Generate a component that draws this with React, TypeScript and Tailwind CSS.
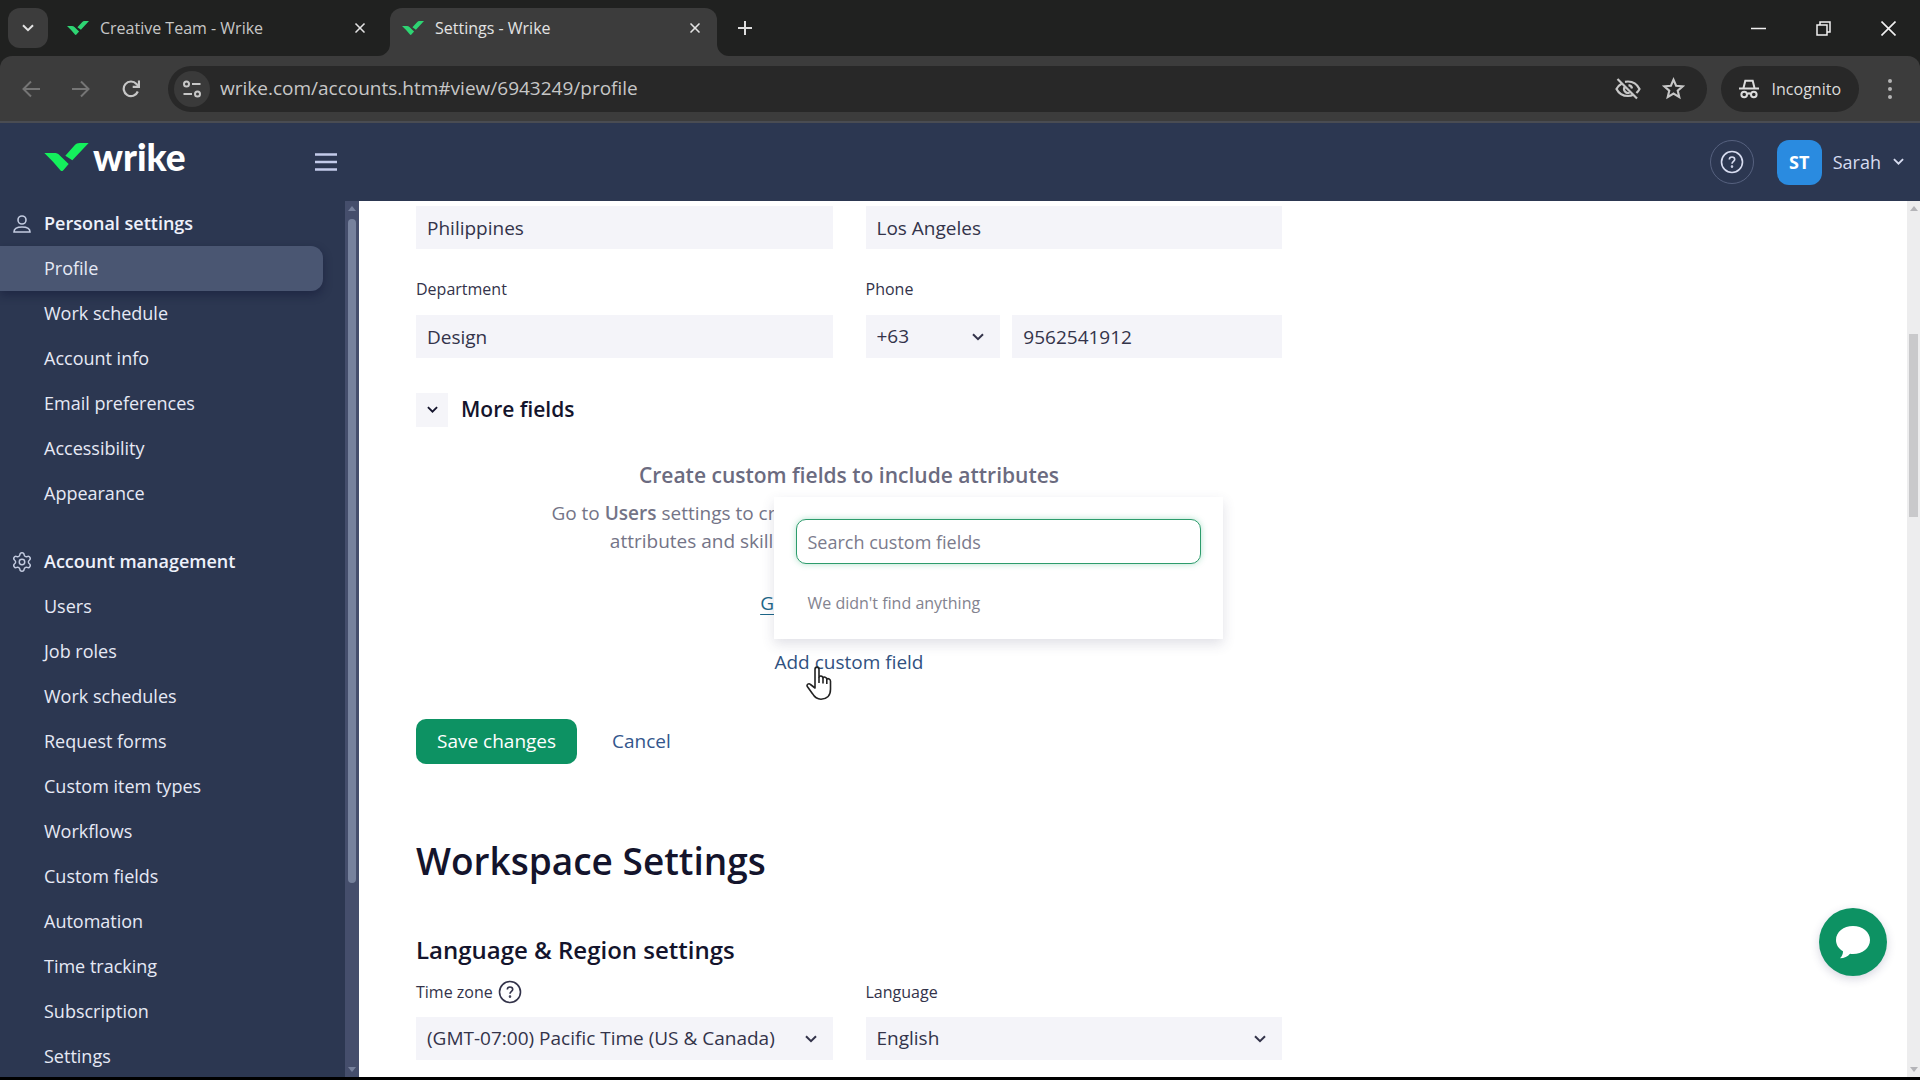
import React from "react";
import { Settings, X } from "lucide-react";

const personal = ["Profile", "Work schedule", "Account info", "Email preferences", "Accessibility", "Appearance"];
const account = [
  "Users", "Job roles", "Work schedules", "Request forms", "Custom item types", "Workflows",
  "Custom fields", "Automation", "Time tracking", "Subscription", "Settings",
];

function WrikeMark({ className }: { className: string }) {
  return (
    <svg viewBox="0 0 133 84" className={className} fill="currentColor" aria-hidden="true">
      <path d="M0 30h30c6 0 11 2 15 6l28 27-16 19c-3 3-6 3-9 0L26 56 0 30Z" />
      <path d="M63 38 91 7c4-5 9-7 15-7h27L84 52Z" />
    </svg>
  );
}

function Chevron({ className }: { className: string }) {
  return (
    <svg viewBox="0 0 12 8" className={className} fill="none" stroke="currentColor" strokeWidth="2" aria-hidden="true">
      <path d="M1 1.2 6 6.2l5-5" />
    </svg>
  );
}

function Tab({ title, active }: { title: string; active?: boolean }) {
  return (
    <div
      className={
        active
          ? "relative flex h-12 w-[327px] items-center rounded-t-xl bg-[#3c3c3c] pr-[14px] pb-2 pl-3 text-[#e3e3e3]"
          : "flex h-12 w-[342px] items-center pr-[22px] pb-2 pl-[19px] text-[#c7c7c7]"
      }
    >
      {active && (
        <>
          <svg viewBox="0 0 12 12" className="absolute bottom-0 -left-3 size-3 text-[#3c3c3c]" aria-hidden="true">
            <path d="M12 0v12H0A12 12 0 0 0 12 0Z" fill="currentColor" />
          </svg>
          <svg viewBox="0 0 12 12" className="absolute -right-3 bottom-0 size-3 text-[#3c3c3c]" aria-hidden="true">
            <path d="M0 0v12h12A12 12 0 0 1 0 0Z" fill="currentColor" />
          </svg>
        </>
      )}
      <WrikeMark className="h-[14px] w-[22px] text-[#2ed573]" />
      <span className="ml-[11px] flex-1 text-[16px]">{title}</span>
      <button aria-label={"Close " + title}>
        <X className="size-4 text-[#e3e3e3]" strokeWidth={2.5} />
      </button>
    </div>
  );
}

function BrowserChrome() {
  return (
    <div className="shrink-0 bg-[#202120]">
      <div className="flex h-14 items-end">
        <div className="flex h-12 items-start pl-2">
          <button aria-label="Search tabs" className="flex size-10 items-center justify-center rounded-xl bg-[#3c3c3c] text-[#e3e3e3]">
            <Chevron className="w-3" />
          </button>
        </div>
        <div className="flex">
          <Tab title="Creative Team - Wrike" />
          <Tab title="Settings - Wrike" active />
        </div>
        <button aria-label="New tab" className="mb-5 ml-5 text-[#dedede]">
          <svg viewBox="0 0 16 16" className="size-4" stroke="currentColor" strokeWidth="2" aria-hidden="true">
            <path d="M8 1v14M1 8h14" />
          </svg>
        </button>
        <div className="mb-5 ml-auto flex items-center gap-[50px] pr-6 text-[#f0f0f0]">
          <button aria-label="Minimize">
            <svg viewBox="0 0 15 15" className="size-[15px]" stroke="currentColor" strokeWidth="1.5" aria-hidden="true">
              <path d="M0 7.5h15" />
            </svg>
          </button>
          <button aria-label="Restore">
            <svg viewBox="0 0 15 15" className="size-[15px]" fill="none" stroke="currentColor" strokeWidth="1.5" aria-hidden="true">
              <path d="M1 4h10v10H1zM4 4V1h10v10h-3" />
            </svg>
          </button>
          <button aria-label="Close window">
            <svg viewBox="0 0 15 15" className="size-[15px]" stroke="currentColor" strokeWidth="1.6" aria-hidden="true">
              <path d="m.5.5 14 14M14.5.5l-14 14" />
            </svg>
          </button>
        </div>
      </div>
      <div className="flex h-[67px] items-center rounded-t-xl border-b-2 border-[#4a4c52] bg-[#3c3c3c]">
        <div className="flex items-center gap-8 pl-[22px]">
          <button aria-label="Back" className="text-[#757575]">
            <svg viewBox="0 0 18 18" className="size-[18px]" fill="none" stroke="currentColor" strokeWidth="2" aria-hidden="true">
              <path d="M18 9H1.500M9 1.500 1.500 9 9 16.500" />
            </svg>
          </button>
          <button aria-label="Forward" className="text-[#757575]">
            <svg viewBox="0 0 18 18" className="size-[18px]" fill="none" stroke="currentColor" strokeWidth="2" aria-hidden="true">
              <path d="M0 9h16.500M9 1.500 16.500 9 9 16.500" />
            </svg>
          </button>
          <button aria-label="Reload" className="text-[#c7c7c7]">
            <svg viewBox="0 0 18 18" className="size-[18px]" fill="none" stroke="currentColor" strokeWidth="2.200" aria-hidden="true">
              <path d="M15.800 11.500A7.300 7.300 0 1 1 14.500 4l2.300 2.300" />
              <path d="M17 .5v6.300h-6.300" />
            </svg>
          </button>
        </div>
        <div className="ml-7 flex h-[46px] min-w-0 flex-1 items-center rounded-full bg-[#282828] pr-[22px] pl-[6px] text-[#c7c7c7]">
          <button aria-label="View site information" className="flex size-9 shrink-0 items-center justify-center rounded-full bg-[#3a3a3a]">
            <svg viewBox="0 0 18 18" className="size-[18px]" fill="none" stroke="currentColor" strokeWidth="2" aria-hidden="true">
              <circle cx="3.500" cy="4" r="2.500" />
              <path d="M9 4h8.500M.5 14H9" />
              <circle cx="14.500" cy="14" r="2.500" />
            </svg>
          </button>
          <input
            aria-label="Address"
            defaultValue="wrike.com/accounts.htm#view/6943249/profile"
            className="ml-[10px] min-w-0 flex-1 bg-transparent text-[19px] outline-none"
          />
          <button aria-label="Third-party cookies blocked">
            <svg viewBox="0 0 26 22" className="h-[22px] w-[26px]" fill="none" stroke="currentColor" strokeWidth="2.200" aria-hidden="true">
              <path d="M7 5.500C4.500 6.800 2.700 8.700 1.500 11c2 4 6.200 7 11.500 7 2 0 3.800-.4 5.400-1.200M10 3.800c1-.2 2-.3 3-.3 5.300 0 9.500 3.500 11.500 7.500-.7 1.400-1.800 2.800-3.100 4" />
              <path d="M9.700 8.800A4 4 0 0 0 14.500 14.700M13.500 7.100A4 4 0 0 1 17 10.500M2.500 1 22 20.500" />
            </svg>
          </button>
          <button aria-label="Bookmark this tab" className="ml-[21px]">
            <svg viewBox="0 0 24 24" className="size-[23px]" fill="none" stroke="currentColor" strokeWidth="2.200" aria-hidden="true">
              <path d="m12 2.800 2.700 6.300 6.900.6-5.200 4.500 1.600 6.700-6-3.600-6 3.600 1.600-6.700-5.200-4.500 6.900-.6Z" />
            </svg>
          </button>
        </div>
        <button className="ml-[14px] flex h-[46px] items-center rounded-full bg-[#282828] px-[18px] text-[16px] text-[#dcdcdc]">
          <svg viewBox="0 0 20 20" className="mr-[13px] size-5" fill="none" stroke="currentColor" strokeWidth="2" aria-hidden="true">
            <path d="M0 9.500h20M4.500 9 6.300 1.800h7.400L15.500 9" />
            <circle cx="5.200" cy="15.500" r="2.800" />
            <circle cx="14.800" cy="15.500" r="2.800" />
            <path d="M8 15c1.300-.8 2.700-.8 4 0" />
          </svg>
          Incognito
        </button>
        <button aria-label="Browser menu" className="mr-7 ml-[29px]">
          <svg viewBox="0 0 4 20" className="h-5 w-1 text-[#b5b5b5]" fill="currentColor" aria-hidden="true">
            <circle cx="2" cy="2" r="2" />
            <circle cx="2" cy="10" r="2" />
            <circle cx="2" cy="18" r="2" />
          </svg>
        </button>
      </div>
    </div>
  );
}

function HelpIcon({ className }: { className: string }) {
  return (
    <svg viewBox="0 0 24 24" className={className} fill="none" stroke="currentColor" strokeWidth="1.600" aria-hidden="true">
      <circle cx="12" cy="12" r="10.500" />
      <path d="M9.300 9.600C9.300 8 10.400 7 12 7s2.700 1 2.700 2.400c0 1.900-2.700 2-2.700 4.300" />
      <circle cx="12" cy="16.600" r=".5" fill="currentColor" />
    </svg>
  );
}

function AppHeader() {
  return (
    <header className="flex h-[78px] shrink-0 items-center bg-[#2c3751] text-[#d7dcf0]">
      <div className="flex w-[337px] items-center justify-between pl-11">
        <a href="#home" className="flex items-center pb-[10px]">
          <WrikeMark className="h-7 w-[45px] text-[#14f05c]" />
          <span className="ml-1 font-['Lato'] text-[37px] leading-7 font-black text-white">wrike</span>
        </a>
        <button aria-label="Toggle menu">
          <svg viewBox="0 0 22 18" className="h-[18px] w-[22px] text-[#c3cbea]" stroke="currentColor" strokeWidth="2.500" aria-hidden="true">
            <path d="M0 1.500h22M0 9h22M0 16.500h22" />
          </svg>
        </button>
      </div>
      <button aria-label="Help" className="ml-auto flex size-11 items-center justify-center rounded-full border border-[#56617f]">
        <HelpIcon className="size-6" />
      </button>
      <button className="ml-[23px] flex items-center pr-4 text-[18px]">
        <span className="flex size-[45px] items-center justify-center rounded-xl bg-[#2a8be0] font-bold text-white">ST</span>
        <span className="ml-[11px]">Sarah</span>
        <Chevron className="ml-3 w-[11px]" />
      </button>
    </header>
  );
}

function NavGroup({ title, icon, items }: { title: string; icon: React.ReactNode; items: string[] }) {
  return (
    <section>
      <h2 className="flex h-[45px] items-center pl-3 text-[18px] font-semibold text-[#eef1fb]">
        <span className="mr-3 flex w-5 justify-center text-[#c3cbe0]">{icon}</span>
        {title}
      </h2>
      <ul>
        {items.map((item) => (
          <li key={item}>
            <a
              href={"#" + item}
              className={
                item === "Profile"
                  ? "mr-[22px] flex h-[45px] items-center rounded-r-xl bg-[#4a5672] pl-11 shadow-[0_4px_10px_rgba(15,20,50,0.45)]"
                  : "mr-[22px] flex h-[45px] items-center pl-11"
              }
            >
              {item}
            </a>
          </li>
        ))}
      </ul>
    </section>
  );
}

function Sidebar() {
  return (
    <aside className="flex w-[359px] shrink-0 bg-[#2c3751] text-[18px] text-[#e6e9f5]">
      <nav className="min-w-0 flex-1 space-y-[23px] overflow-hidden">
        <NavGroup
          title="Personal settings"
          items={personal}
          icon={
            <svg viewBox="0 0 18 18" className="size-[18px]" fill="none" stroke="currentColor" strokeWidth="1.600" aria-hidden="true">
              <circle cx="9" cy="5" r="4" />
              <path d="M1 17c0-3 3-5 8-5s8 2 8 5Z" />
            </svg>
          }
        />
        <NavGroup title="Account management" items={account} icon={<Settings className="size-[22px] shrink-0" strokeWidth={1.6} />} />
      </nav>
      <div className="flex w-[14px] flex-col items-center justify-between bg-[#454e6c] py-[5px]">
        <svg viewBox="0 0 8 5" className="w-2 shrink-0 text-[#77819d]" fill="currentColor" aria-hidden="true"><path d="M0 5 4 0l4 5Z" /></svg>
        <div className="my-2 flex-1">
          <div className="h-[79%] w-2 rounded-full bg-[#77829d]" />
        </div>
        <svg viewBox="0 0 8 5" className="w-2 shrink-0 text-[#77819d]" fill="currentColor" aria-hidden="true"><path d="m0 0 4 5 4-5Z" /></svg>
      </div>
    </aside>
  );
}

const field = "h-[43px] w-full bg-[#f4f4f9] px-[11px] text-[19px] text-[#33334a] outline-none";

function SelectBox({ id, value, label }: { id: string; value: string; label?: string }) {
  return (
    <div className="relative">
      <select id={id} aria-label={label} defaultValue={value} className={field + " appearance-none"}>
        <option>{value}</option>
      </select>
      <Chevron className="pointer-events-none absolute top-[18px] right-4 w-3 text-[#33334a]" />
    </div>
  );
}

function CustomFieldPopup() {
  return (
    <div className="absolute bottom-full left-0 z-10 mb-[9px] w-[449px] bg-white px-[22px] pt-[22px] pb-6 text-left shadow-[0_5px_12px_rgba(60,60,100,0.16)]">
      <input
        aria-label="Search custom fields"
        placeholder="Search custom fields"
        className="h-[45px] w-full rounded-[10px] border border-[#2d9c6c] bg-white px-[10px] text-[18px] outline-none placeholder:text-[#7b7b8c] shadow-[0_0_6px_rgba(30,170,110,0.35)]"
      />
      <p className="mt-[27px] ml-[11px] text-[16px] leading-6 text-[#83838f]">We didn't find anything</p>
    </div>
  );
}

function PointerCursor() {
  return (
    <svg viewBox="0 0 26 35" className="pointer-events-none absolute top-[18px] left-8 z-20 h-[35px] w-[26px]" fill="white" stroke="#222" strokeWidth="1.600" strokeLinejoin="round" aria-hidden="true">
      <path d="M9 21V3.500C9 .3 13 .3 13 3.500V11c.5-1.500 3.800-1.200 4 .8.800-1.300 3.700-.8 3.800 1.200 1.200-.8 3.700-.2 3.700 2.200v8c0 6.500-4 10-9.500 10-4 0-6.500-2-8.500-5.500L1.300 20.500c-1-2 1.500-3.700 3.200-2L9 22Z" />
      <path d="M13 11v6M17 12v5.500M20.800 13v5" fill="none" />
    </svg>
  );
}

function Content() {
  return (
    <main className="min-w-0 flex-1 overflow-hidden pt-[5px] pl-[57px] text-[#14142c]">
      <form className="max-w-[866px]">
        <div className="grid grid-cols-2 gap-x-[33px]">
          <input aria-label="Country" defaultValue="Philippines" className={field} />
          <input aria-label="City" defaultValue="Los Angeles" className={field} />
          <div className="mt-7">
            <label htmlFor="department" className="block text-[16px] leading-6 text-[#33334a]">Department</label>
            <input id="department" defaultValue="Design" className={field + " mt-[14px]"} />
          </div>
          <div className="mt-7">
            <label htmlFor="phone" className="block text-[16px] leading-6 text-[#33334a]">Phone</label>
            <div className="mt-[14px] grid grid-cols-[1fr_2fr] gap-3">
              <SelectBox id="code" label="Country code" value="+63" />
              <input id="phone" defaultValue="9562541912" className={field} />
            </div>
          </div>
        </div>

        <div className="mt-[35px] flex h-[34px] items-center">
          <button type="button" aria-label="Toggle more fields" className="flex h-[34px] w-8 items-center justify-center bg-[#f5f5f9]">
            <Chevron className="w-[11px]" />
          </button>
          <h3 className="ml-[13px] text-[21px] font-semibold">More fields</h3>
        </div>

        <div className="mt-[34px] text-center text-[19px] leading-7 text-[#747487]">
          <h4 className="text-[21px] leading-7 font-semibold text-[#6b6b80]">Create custom fields to include attributes</h4>
          <p className="mt-[10px]">
            Go to <b className="font-semibold">Users</b> settings to create custom fields with information about
            <br />
            attributes and skills of users. They will all appear here.
          </p>
          <a href="#users" className="mt-[34px] inline-block align-top text-[#1c6688] underline underline-offset-4">Go to Users settings</a>
          <div className="mt-[31px] flex justify-center">
            <div className="relative">
              <CustomFieldPopup />
              <a href="#add" className="block text-[#31517f]">Add custom field</a>
              <PointerCursor />
            </div>
          </div>
        </div>

        <div className="mt-[43px] flex h-[45px] items-center text-[19px]">
          <button type="button" className="h-[45px] rounded-[10px] bg-[#0d9263] px-[21px] text-white">Save changes</button>
          <button type="button" className="ml-[35px] text-[#33568c]">Cancel</button>
        </div>

        <h1 className="mt-[73px] text-[37px] leading-[48px] font-semibold">Workspace Settings</h1>
        <h2 className="mt-[49px] text-[24px] leading-8 font-semibold">Language &amp; Region settings</h2>
        <div className="mt-[14px] grid grid-cols-2 gap-x-[33px]">
          <div>
            <div className="flex h-6 items-center text-[16px] text-[#33334a]">
              <label htmlFor="timezone">Time zone</label>
              <HelpIcon className="ml-[5px] size-6" />
            </div>
            <div className="mt-[13px]">
              <SelectBox id="timezone" value="(GMT-07:00) Pacific Time (US & Canada)" />
            </div>
          </div>
          <div>
            <label htmlFor="language" className="block text-[16px] leading-6 text-[#33334a]">Language</label>
            <div className="mt-[13px]">
              <SelectBox id="language" value="English" />
            </div>
          </div>
        </div>
      </form>
    </main>
  );
}

export default function App() {
  return (
    <div className="relative flex h-screen flex-col overflow-hidden border-b-[3px] border-black bg-white font-['Open_Sans',sans-serif]">
      <BrowserChrome />
      <AppHeader />
      <div className="flex min-h-0 flex-1">
        <Sidebar />
        <Content />
        <div className="flex w-[13px] flex-col items-center bg-[#ededee] py-[5px]">
          <svg viewBox="0 0 8 5" className="w-2 shrink-0 text-[#b4b4b8]" fill="currentColor" aria-hidden="true"><path d="M0 5 4 0l4 5Z" /></svg>
          <div className="flex w-full flex-1 flex-col items-center pt-[123px]">
            <div className="h-[25%] w-[9px] bg-[#c9c9cb]" />
          </div>
          <svg viewBox="0 0 8 5" className="w-2 shrink-0 text-[#b4b4b8]" fill="currentColor" aria-hidden="true"><path d="m0 0 4 5 4-5Z" /></svg>
        </div>
      </div>
      <button aria-label="Open chat" className="absolute right-[33px] bottom-[101px] flex size-[68px] items-center justify-center rounded-full bg-[#0d9263] shadow-[0_3px_10px_rgba(50,50,100,0.2)]">
        <svg viewBox="0 0 34 34" className="size-[34px]" fill="white" aria-hidden="true">
          <path d="M17 1c9.500 0 17 6 17 14s-7.500 14-17 14c-1 0-2-.1-3-.3-2.500 2.800-5.500 4.500-10 4.600 2-2 3-4.300 3-7C2.500 23.800 0 19.500 0 15 0 7 7.500 1 17 1Z" />
        </svg>
      </button>
    </div>
  );
}
